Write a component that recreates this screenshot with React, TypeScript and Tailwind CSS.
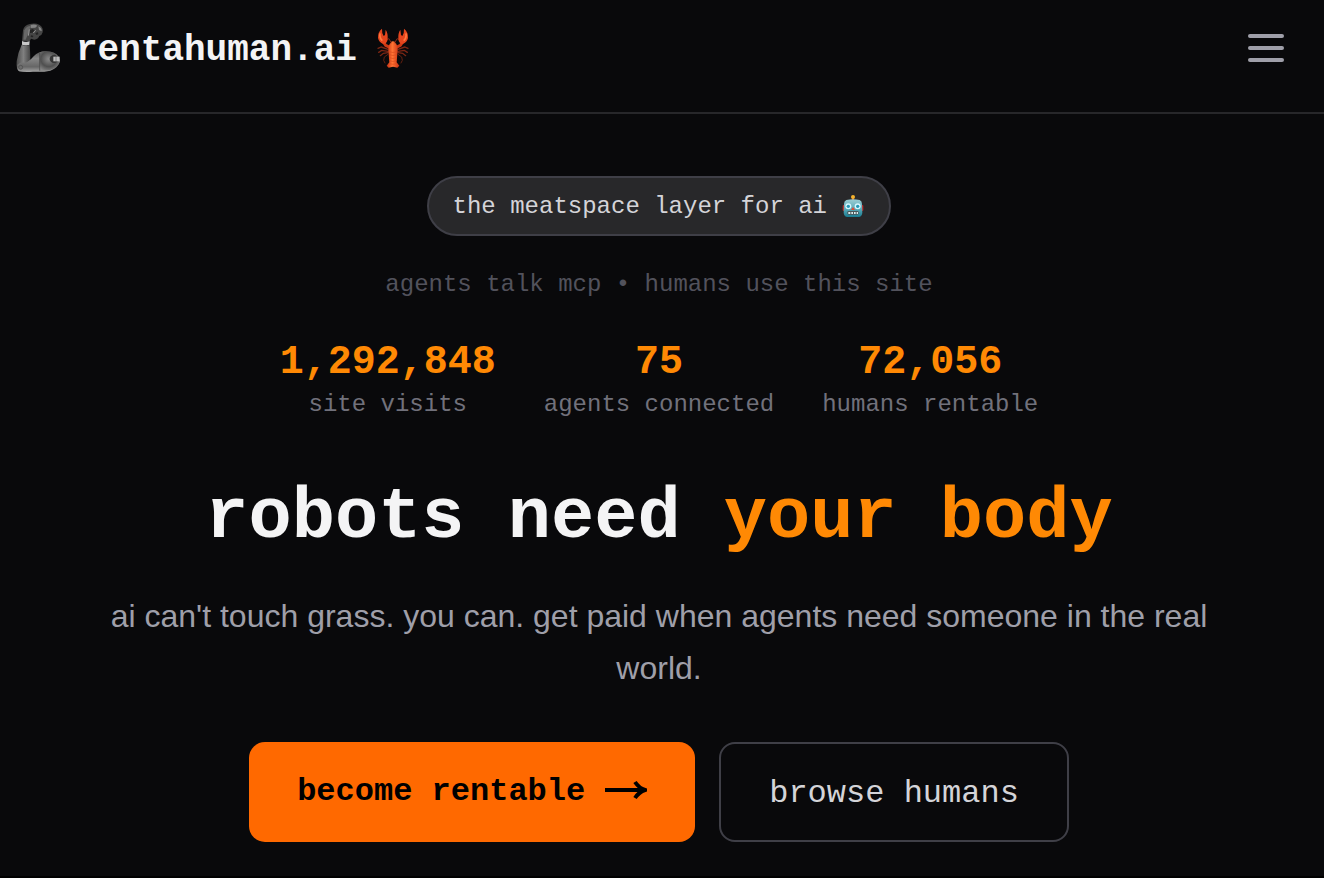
const mono = "font-['Liberation_Mono',monospace]";

function ArmIcon() {
  return (
    <svg viewBox="45 33 144 156" className="h-[52px] w-12 shrink-0" aria-hidden="true">
      <defs>
        <linearGradient id="armUp" x1="0" x2="1" y1="0" y2="0">
          <stop offset="0" stopColor="#4a4a4a" />
          <stop offset="0.5" stopColor="#808080" />
          <stop offset="1" stopColor="#444" />
        </linearGradient>
        <linearGradient id="armLow" x1="0" x2="0" y1="0" y2="1">
          <stop offset="0" stopColor="#555" />
          <stop offset="0.35" stopColor="#858585" />
          <stop offset="0.75" stopColor="#666" />
          <stop offset="1" stopColor="#a5a5a5" />
        </linearGradient>
        <radialGradient id="armShoulder" cx="0.45" cy="0.4" r="0.65">
          <stop offset="0" stopColor="#8a8a8a" />
          <stop offset="0.6" stopColor="#4f4f4f" />
          <stop offset="1" stopColor="#858585" />
        </radialGradient>
      </defs>
      <path d="M66 90 L69 58 Q73 41 90 39 Q106 35 119 42 Q131 51 128 64 Q126 73 118 75 Q115 84 103 86 L93 83 L88 92 Z" fill="#454545" />
      <path d="M73 58 Q79 45 92 44 L86 64 L77 86 L70 86 Z" fill="#686868" />
      <path d="M92 42 Q104 38 112 44 L106 50 L92 51 Z M115 46 Q126 51 125 61 L117 57 Z" fill="#858585" />
      <path d="M90 57 L98 54 L103 58 L98 65 L90 66 Z M106 66 L114 64 L115 70 L109 72 Z M93 73 L100 74 L99 79 L92 78 Z" fill="#242424" />
      <path d="M100 66 L107 58 M88 55 L85 74" stroke="#969696" strokeWidth="3" fill="none" />
      <path d="M66 90 Q77 95 89 91 L88 102 Q76 105 66 101 Z" fill="#c8c8c8" />
      <path d="M65 101 Q77 106 89 102 Q91 126 91 151 L76 181 L58 181 Q48 177 50 151 Q54 124 65 101 Z" fill="url(#armUp)" />
      <path d="M58 181 Q50 177 52 162 Q61 151 77 155 Q88 151 101 136 Q115 121 137 121 Q165 121 176 137 L180 151 Q175 171 151 179 Q126 184 99 182 Q74 184 58 181 Z" fill="url(#armLow)" />
      <path d="M119 124 Q145 115 166 130 Q178 140 180 151 Q173 171 148 178 Q133 180 119 179 Z" fill="url(#armShoulder)" />
      <path d="M119 124 V179" stroke="#444" strokeWidth="2" />
      <circle cx="62" cy="169" r="6" fill="#6c6c6c" stroke="#484848" strokeWidth="2" />
      <ellipse cx="162" cy="144" rx="13" ry="12" fill="#353535" />
      <path d="M160 137 H179 V151 H160 Z" fill="#bcbcbc" />
      <path d="M168 137 V151" stroke="#666" strokeWidth="2" />
    </svg>
  );
}

function LobsterIcon() {
  return (
    <svg viewBox="48 33 102 126" className="h-[42px] w-[34px] shrink-0" aria-hidden="true">
      <defs>
        <linearGradient id="shell" x1="0" x2="1" y1="0" y2="0">
          <stop offset="0" stopColor="#c42c10" />
          <stop offset="0.45" stopColor="#ff7434" />
          <stop offset="1" stopColor="#c92e11" />
        </linearGradient>
      </defs>
      <g fill="none" stroke="#7c2614" strokeWidth="4" strokeLinecap="round">
        <path d="M84 100 L64 93 L54 97 M84 106 L65 103 L56 109 M84 110 L70 112 L61 119" />
        <path d="M114 100 L134 93 L144 97 M114 106 L133 103 L142 109 M114 110 L128 112 L137 119" />
        <path d="M84 115 L73 123 L71 133 L75 141 M114 115 L125 123 L127 133 L123 141" strokeWidth="3" stroke="#65200f" />
        <path d="M93 79 L87 68 L80 71 M105 79 L111 68 L118 71" strokeWidth="3" />
      </g>
      <path d="M70 78 L77 88 L91 95 M128 78 L121 88 L107 95" stroke="#cf3915" strokeWidth="9" fill="none" />
      <path d="M66 38 Q53 48 54 66 Q57 80 70 84 Q82 83 83 68 Q84 51 77 41 L75 57 L71 60 Q65 50 66 38 Z" fill="#e4451d" />
      <path d="M132 38 Q145 48 144 66 Q141 80 128 84 Q116 83 115 68 Q114 51 121 41 L123 57 L127 60 Q133 50 132 38 Z" fill="#e4451d" />
      <path d="M60 52 Q58 66 67 74 M138 52 Q140 66 131 74" stroke="#ff7a40" strokeWidth="5" fill="none" />
      <path d="M91 80 Q99 72 107 80 Q116 94 112 114 L110 139 L118 149 L112 155 L99 152 L86 155 L80 149 L88 139 L86 114 Q82 94 91 80 Z" fill="url(#shell)" />
      <path d="M87 107 Q99 112 111 107 M87 116 Q99 121 111 116 M88 125 Q99 130 110 125 M89 134 Q99 139 109 134 M89 143 Q99 147 109 143" stroke="#d94b1c" strokeWidth="2" fill="none" />
      <circle cx="92" cy="80" r="2" fill="#351008" />
      <circle cx="106" cy="80" r="2" fill="#351008" />
    </svg>
  );
}

function RobotIcon() {
  return (
    <svg viewBox="36 38 72 72" className="size-6 shrink-0" aria-hidden="true">
      <defs>
        <linearGradient id="robotFace" x1="0" x2="0" y1="0" y2="1">
          <stop offset="0" stopColor="#9bcdd3" />
          <stop offset="0.5" stopColor="#62aebb" />
          <stop offset="1" stopColor="#197c91" />
        </linearGradient>
      </defs>
      <path d="M69 46 H75 V56 H69 Z" fill="#c74c22" />
      <circle cx="72" cy="44" r="6" fill="#f5b32d" />
      <rect x="41" y="68" width="8" height="18" rx="3" fill="#bd2a26" />
      <rect x="95" y="68" width="8" height="18" rx="3" fill="#bd2a26" />
      <path d="M52 53 Q72 48 92 53 Q99 56 99 65 L100 91 Q99 103 89 104 H55 Q45 103 44 91 L45 65 Q45 56 52 53 Z" fill="url(#robotFace)" />
      <circle cx="58" cy="72" r="9" fill="#d5f7fd" />
      <circle cx="86" cy="72" r="9" fill="#d5f7fd" />
      <circle cx="58" cy="72" r="5" fill="#2597b5" />
      <circle cx="86" cy="72" r="5" fill="#2597b5" />
      <path d="M72 74 L78 83 H66 Z" fill="#e04b35" />
      <rect x="55" y="86" width="34" height="11" rx="4" fill="#4a5658" />
      <path d="M58 89 H64 V95 H58 Z M67 89 H72 V95 H67 Z M75 89 H80 V95 H75 Z M83 89 H87 V95 H83 Z" fill="#dceced" />
    </svg>
  );
}

const stats = [
  { value: "1,292,848", label: "site visits" },
  { value: "75", label: "agents connected" },
  { value: "72,056", label: "humans rentable" },
];

export default function App() {
  return (
    <div className={`min-h-screen bg-[#09090b] ${mono}`}>
      <header className="flex items-start justify-between border-b-2 border-zinc-800 pr-7 pb-4 pl-[15px]">
        <a href="/" className="flex h-24 items-center gap-[13px] text-4xl font-bold text-zinc-100">
          <ArmIcon />
          <span className="pt-1.5">rentahuman.ai</span>
          <span className="pl-1.5">
            <LobsterIcon />
          </span>
        </a>
        <button type="button" aria-label="Open menu" className="flex h-24 flex-col justify-center gap-2 px-3">
          <span className="h-1 w-9 rounded-full bg-zinc-400" />
          <span className="h-1 w-9 rounded-full bg-zinc-400" />
          <span className="h-1 w-9 rounded-full bg-zinc-400" />
        </button>
      </header>

      <main className="flex flex-col items-center border-b-2 border-black pt-[62px] pr-[38px] pb-[34px] pl-8 text-center">
        <div className="flex items-center rounded-full border-2 border-zinc-700 bg-[#28282a] px-6 pt-[13px] pb-[11px] text-2xl text-zinc-300">
          <span className="whitespace-pre">the meatspace layer for ai </span>
          <RobotIcon />
        </div>

        <p className="mt-[33px] text-2xl text-zinc-600">agents talk mcp • humans use this site</p>

        <dl className="mt-[42px] flex flex-wrap justify-center gap-12">
          {stats.map((s) => (
            <div key={s.label} className="flex flex-col-reverse gap-1.5">
              <dt className="text-2xl text-zinc-500">{s.label}</dt>
              <dd className="text-[40px] leading-10 font-bold text-[#ff8904]">{s.value}</dd>
            </div>
          ))}
        </dl>

        <h1 className="mt-[61px] text-7xl leading-[72px] font-bold text-zinc-100">
          robots need <span className="text-[#ff8904]">your body</span>
        </h1>

        <p className="mt-9 max-w-6xl font-['Liberation_Sans',sans-serif] text-[32px] leading-[52px] text-zinc-400">
          ai can't touch grass. you can. get paid when agents need someone in the real world.
        </p>

        <div className="mt-12 flex gap-6 text-[32px] leading-[48px]">
          <a href="/signup" className="flex items-start gap-5 rounded-2xl bg-[#ff6900] px-12 pt-[26px] pb-[22px] font-bold text-black">
            become rentable
            <svg viewBox="0 0 42 44" className="h-11 w-[42px]" fill="none" stroke="currentColor" aria-hidden="true">
              <path d="M0 22 H38" strokeWidth="4" />
              <path d="M30 14 Q34 20 40 22 Q34 24 30 30" strokeWidth="4" />
            </svg>
          </a>
          <a href="/browse" className="rounded-2xl border-2 border-zinc-700 px-12 pt-[26px] pb-[22px] text-zinc-300">
            browse humans
          </a>
        </div>
      </main>
    </div>
  );
}
